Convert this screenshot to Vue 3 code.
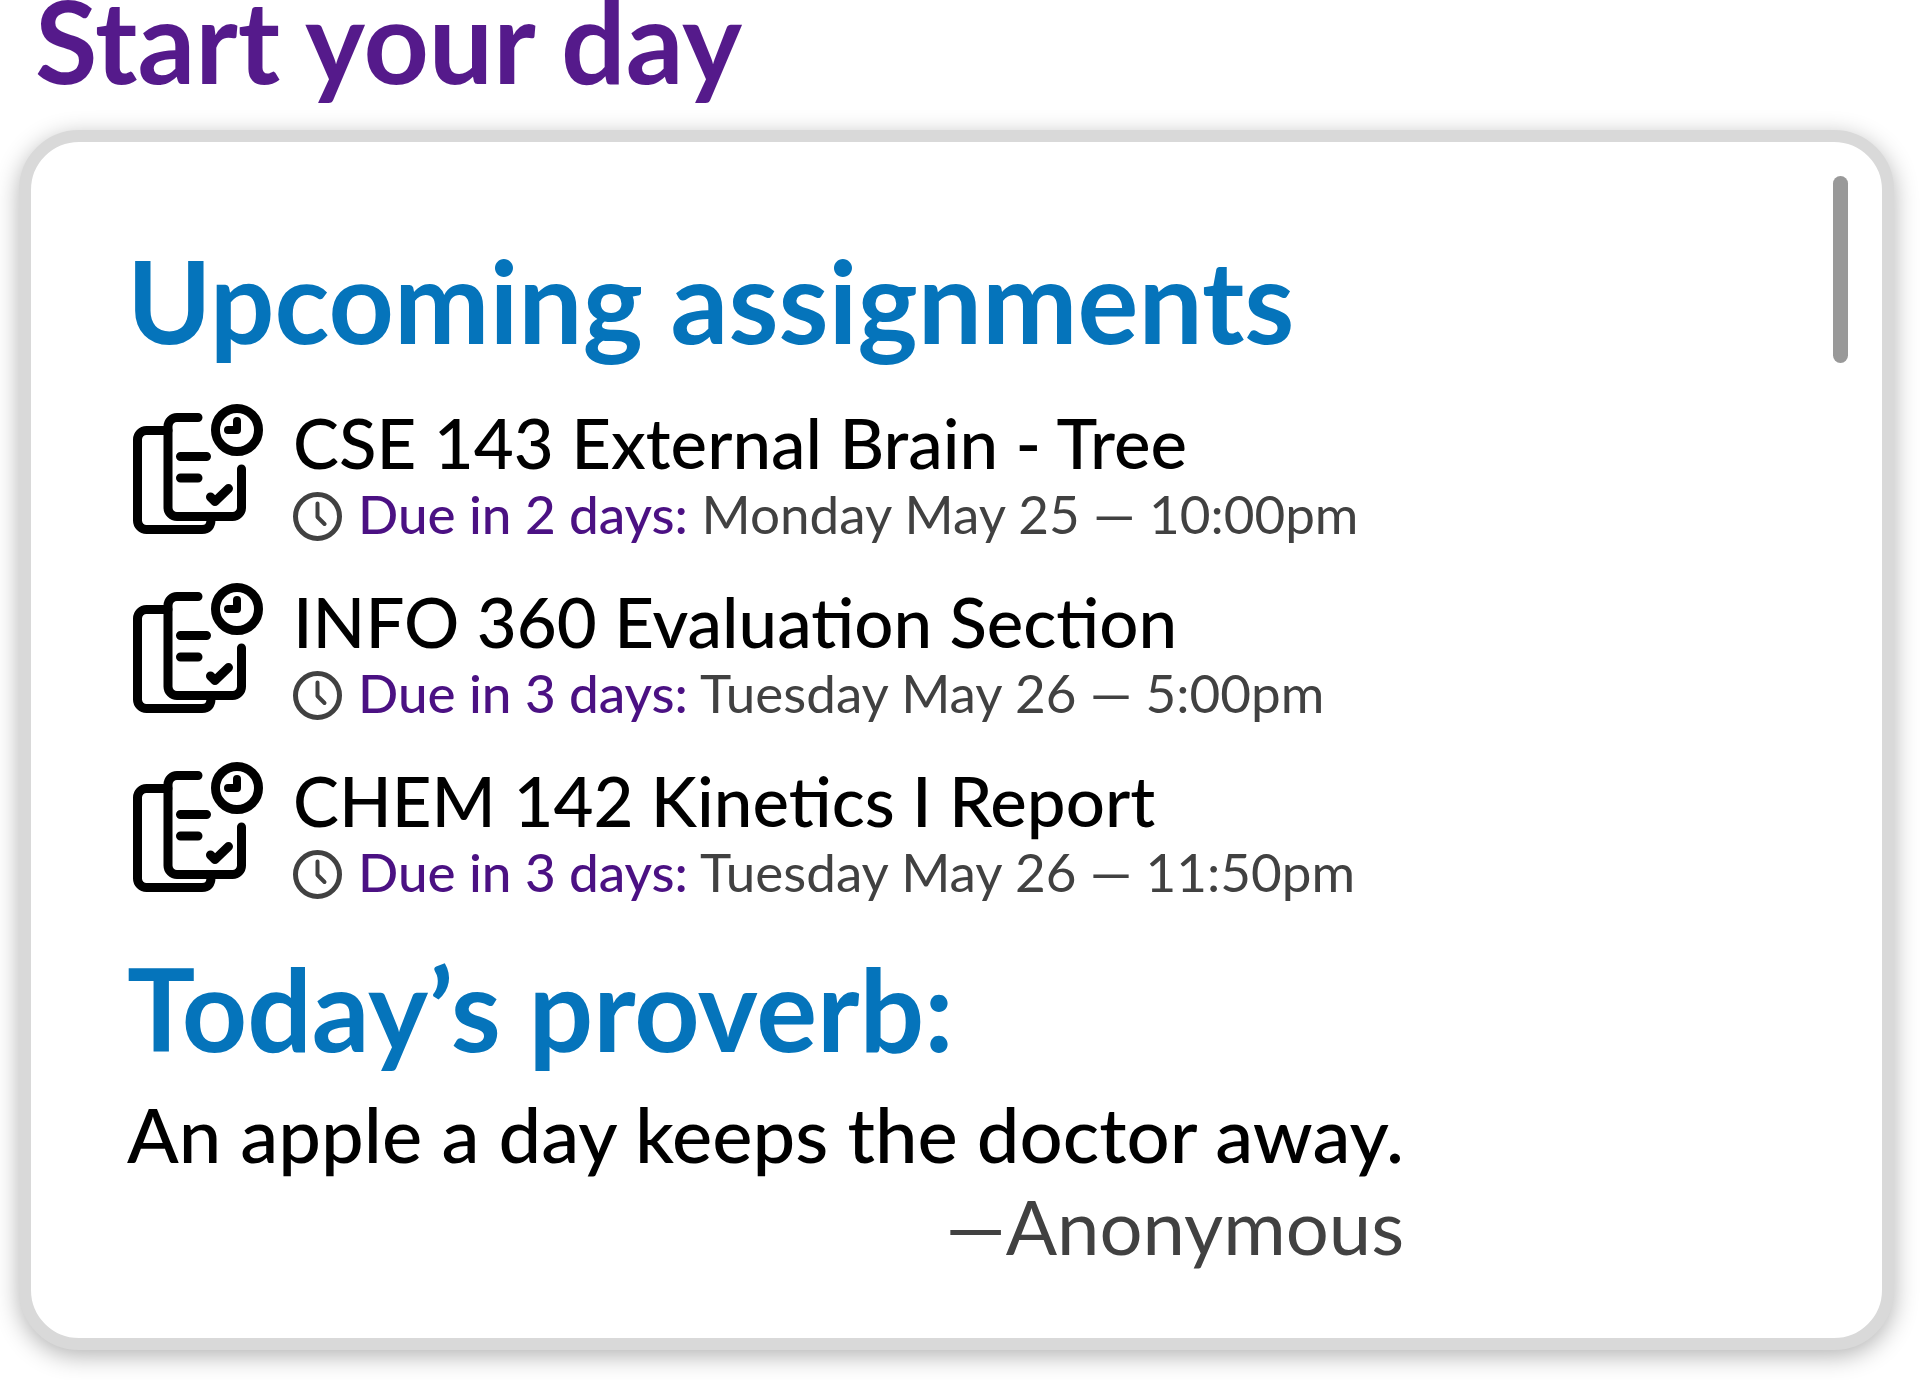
<template>
  <main class="page">
    <h1 class="page-title">Start your day</h1>

    <div class="card">
      <section>
        <h2 class="section-title">Upcoming assignments</h2>
        <ul class="assignments">
          <li v-for="item in assignments" :key="item.title" class="assignment">
            <svg class="paper-icon" viewBox="0 0 130 130" aria-hidden="true">
              <path d="M35 26.5H13.5a9 9 0 0 0-9 9v81a9 9 0 0 0 9 9H69q9 0 9-10" />
              <path d="M65 13.5H44a9 9 0 0 0-9 9v81a9 9 0 0 0 9 9h55.500a9 9 0 0 0 9-9V65" />
              <path d="M47.500 52.500h26M47.500 74H65" />
              <path d="M77.500 93l4.500 4.500 13.500-13" />
              <circle cx="104" cy="26" r="21.500" />
              <path class="hands" d="M104 17v9h-9" />
            </svg>
            <div class="details">
              <div class="name">{{ item.title }}</div>
              <div class="due">
                <svg class="clock-icon" viewBox="0 0 49 49" aria-hidden="true">
                  <circle cx="24.500" cy="24.500" r="22" />
                  <path class="hands" d="M24.500 11.500v13.500l7 7" />
                </svg>
                <span><span class="due-in">{{ item.dueIn }}</span> {{ item.date }}</span>
              </div>
            </div>
          </li>
        </ul>
      </section>

      <section class="proverb">
        <h2 class="section-title">Today’s proverb:</h2>
        <blockquote class="quote">
          <p>An apple a day keeps the doctor away.</p>
          <footer>—Anonymous</footer>
        </blockquote>
      </section>

      <div class="scroll-thumb"></div>
    </div>
  </main>
</template>

<script setup>
const assignments = [
  { title: 'CSE 143 External Brain - Tree', dueIn: 'Due in 2 days:', date: 'Monday May 25 — 10:00pm' },
  { title: 'INFO 360 Evaluation Section', dueIn: 'Due in 3 days:', date: 'Tuesday May 26 — 5:00pm' },
  { title: 'CHEM 142 Kinetics I Report', dueIn: 'Due in 3 days:', date: 'Tuesday May 26 — 11:50pm' },
];
</script>

<style>
body {
  margin: 0;
  background: #fff;
}
</style>

<style scoped>
.page {
  padding: 0 26px 30px 19px;
  font-family: Lato, sans-serif;
  color: #000;
}

.page-title,
.section-title {
  margin: 0;
  font-size: 114px;
  font-weight: 700;
}

.page-title {
  padding-left: 16px;
  line-height: 80px;
  color: #551a8b;
}

.section-title {
  line-height: 120px;
  color: #0574bb;
}

.card {
  position: relative;
  margin-top: 50px;
  padding: 98px 96px 66px;
  border: 12px solid #d9d9d9;
  border-radius: 60px;
  background: #fff;
  box-shadow: 0 6px 24px rgba(0, 0, 0, 0.3);
}

/* thumb floats over the card's right edge */
.scroll-thumb {
  position: absolute;
  top: 34px;
  right: 34px;
  width: 15px;
  height: 187px;
  border-radius: 8px;
  background: #999;
}

.assignments {
  display: flex;
  flex-direction: column;
  gap: 37px;
  margin: 44px 0 0;
  padding: 0 0 0 6px;
  list-style: none;
}

.assignment {
  display: flex;
  gap: 30px;
}

.paper-icon,
.clock-icon {
  flex: none;
  fill: none;
  stroke-linecap: round;
  stroke-linejoin: round;
}

.paper-icon {
  width: 130px;
  height: 130px;
  stroke: #000;
  stroke-width: 9;
}

.paper-icon .hands {
  stroke-width: 8;
}

.name {
  font-size: 69px;
  font-weight: 500;
  line-height: 78px;
}

.due {
  display: flex;
  align-items: center;
  gap: 16px;
  font-size: 53px;
  line-height: 64px;
  color: #414141;
}

.due-in {
  font-weight: 500;
  color: #4b1183;
}

.clock-icon {
  width: 49px;
  height: 49px;
  margin-top: 4px;
  stroke: #414141;
  stroke-width: 5;
}

.clock-icon .hands {
  stroke-width: 4;
}

.proverb {
  margin-top: 44px;
}

.quote {
  width: fit-content;
  margin: 20px 0 0;
  font-size: 76px;
  line-height: 92px;
}

.quote p {
  margin: 0;
  font-weight: 500;
}

.quote footer {
  text-align: right;
  color: #414141;
}
</style>
